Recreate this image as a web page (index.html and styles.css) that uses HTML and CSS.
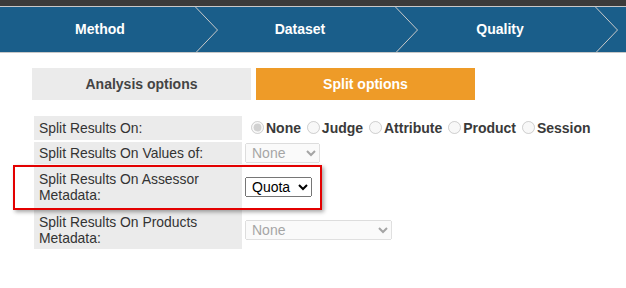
FILE: index.html
```html
<!DOCTYPE html>
<html lang="en">
<head>
    <meta charset="UTF-8">
    <title>Split options</title>
    <link rel="stylesheet" href="styles.css">
</head>
<body>
    <div class="topbar"></div>

    <nav class="steps">
        <div class="step">Method
            <svg class="chevron" width="24" height="46" viewBox="0 0 24 46"><polyline points="0.5,0 22.5,23 0.5,46" /></svg>
        </div>
        <div class="step">Dataset
            <svg class="chevron" width="24" height="46" viewBox="0 0 24 46"><polyline points="0.5,0 22.5,23 0.5,46" /></svg>
        </div>
        <div class="step">Quality
            <svg class="chevron" width="24" height="46" viewBox="0 0 24 46"><polyline points="0.5,0 22.5,23 0.5,46" /></svg>
        </div>
    </nav>

    <section class="options">
        <div class="tabs">
            <div class="tab">Analysis options</div>
            <div class="tab active">Split options</div>
        </div>

        <table class="split-table">
            <tr class="row-radio">
                <td class="label">Split Results On:</td>
                <td class="value">
                    <label class="choice"><input type="radio" name="split" checked disabled>None</label>
                    <label class="choice"><input type="radio" name="split" disabled>Judge</label>
                    <label class="choice"><input type="radio" name="split" disabled>Attribute</label>
                    <label class="choice"><input type="radio" name="split" disabled>Product</label>
                    <label class="choice"><input type="radio" name="split" disabled>Session</label>
                </td>
            </tr>
            <tr class="row-small">
                <td class="label">Split Results On Values of:</td>
                <td class="value">
                    <select class="sel-values" disabled><option>None</option></select>
                </td>
            </tr>
            <tr class="row-assessor">
                <td class="label">Split Results On Assessor<br>Metadata:</td>
                <td class="value">
                    <select class="sel-assessor"><option>Quota</option></select>
                </td>
            </tr>
            <tr class="row-products">
                <td class="label">Split Results On Products<br>Metadata:</td>
                <td class="value">
                    <select class="sel-products" disabled><option>None</option></select>
                </td>
            </tr>
        </table>

        <!-- highlight drawn over the assessor row -->
        <div class="highlight"></div>
    </section>
</body>
</html>
```

FILE: styles.css
```css
body {
    font-family: "Liberation Sans", Arial, sans-serif;
    margin: 0;
    padding: 0;
    background-color: #fff;
    color: #333;
}

.topbar {
    height: 6px;
    background-color: #3b3b3b;
    border-bottom: 1px solid #c8c8c8;
}

.steps {
    display: flex;
    height: 45px;
    background-color: #1a5e8a;
    border-bottom: 1px solid #c8c8c8;
    overflow: hidden;
}

.step {
    position: relative;
    flex: 0 0 200px;
    line-height: 45px;
    text-align: center;
    color: #fff;
    font-weight: bold;
    font-size: 14px;
}

.chevron {
    position: absolute;
    top: 0;
    left: 195px;
}

.chevron polyline {
    fill: none;
    stroke: #c9c9c9;
    stroke-width: 1;
}

.options {
    position: relative;
    padding: 15px 0 0 32px;
}

.tabs {
    display: flex;
    gap: 5px;
}

.tab {
    width: 219px;
    height: 32px;
    line-height: 32px;
    text-align: center;
    font-size: 14px;
    font-weight: bold;
    color: #444;
    background-color: #ebebeb;
}

.tab.active {
    background-color: #ee9b28;
    color: #fff;
}

.split-table {
    margin-top: 14px;
    border-spacing: 2px;
    font-size: 13.9px;
    line-height: 16px;
}

.split-table td {
    padding: 0;
    vertical-align: middle;
}

.label {
    width: 203px;
    padding-left: 5px !important;
    background-color: #ebebeb;
    color: #333;
}

.value {
    padding-left: 1px !important;
}

.row-radio td { height: 24px; }
.row-small td { height: 22px; }
.row-assessor td { height: 42px; }
.row-products td { height: 39px; }

.choice {
    font-size: 14px;
    font-weight: bold;
    color: #3a3a3a;
    white-space: nowrap;
}

.choice input {
    width: 13px;
    height: 13px;
    margin: 0 2px 0 2px;
    vertical-align: -1px;
}

.choice:first-child input {
    margin-left: 6px;
}

select {
    font-family: "Liberation Sans", Arial, sans-serif;
    font-size: 14px;
    height: 20px;
    padding: 0 0 0 2px;
}

.sel-values { width: 75px; }
.sel-assessor { width: 67px; color: #000; }
.sel-products { width: 147px; }

.highlight {
    position: absolute;
    left: 13px;
    top: 112px;
    width: 305px;
    height: 41px;
    border: 2px solid #e30000;
    box-shadow: 2px 2px 4px rgba(0, 0, 0, 0.35);
}
```
